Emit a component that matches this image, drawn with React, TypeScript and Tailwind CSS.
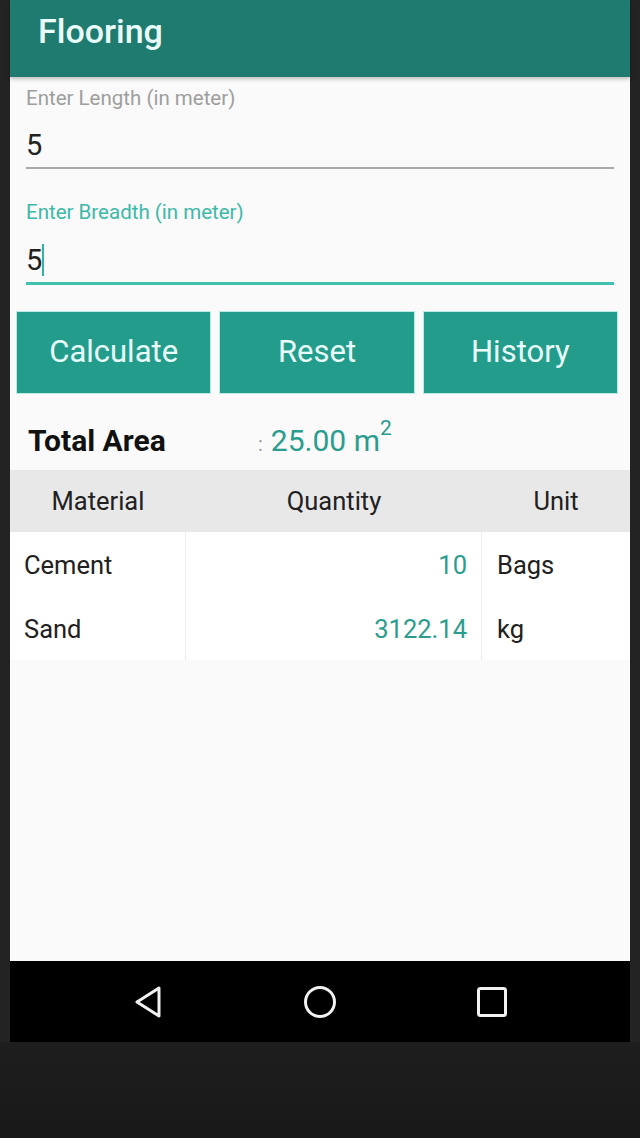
import React from "react";

export default function App() {
  const font = { fontFamily: "Roboto, 'Noto Sans', sans-serif" };
  return (
    <div className="w-[640px] h-[1138px] bg-[#1c1c1c] flex flex-col" style={font}>
      <div className="flex flex-col px-[10px] bg-[#232323]">
        {/* Header */}
        <div className="h-[77px] bg-[#1f7b70] flex items-start pl-[28px] pt-[10px] shadow-[0_2px_4px_rgba(0,0,0,0.25)] z-10 relative">
          <span className="text-[34px] font-medium text-[#eafffb] leading-[42px]">Flooring</span>
        </div>
        {/* Content */}
        <div className="h-[884px] bg-[#fafafa] flex flex-col">
          <div className="px-[16px] pt-[9px] flex flex-col">
            <span className="text-[20.5px] leading-[24px] text-[#9e9e9e]">Enter Length (in meter)</span>
            <span className="text-[29px] leading-[34px] text-[#212121] mt-[18px]">5</span>
            <div className="h-[2px] bg-[#a8a8a8] mt-[5px]"></div>
          </div>
          <div className="px-[16px] pt-[31px] flex flex-col">
            <span className="text-[20.5px] leading-[24px] text-[#3cb9a8]">Enter Breadth (in meter)</span>
            <div className="flex items-center mt-[19px] h-[34px]">
              <span className="text-[29px] leading-[34px] text-[#212121]">5</span>
              <span className="w-[2px] h-[32px] bg-[#33b3a3]"></span>
            </div>
            <div className="h-[3px] bg-[#3fc0b0] mt-[5px]"></div>
          </div>
          <div className="flex gap-[8px] pl-[6px] pr-[12px] mt-[26px] h-[83px]">
            {["Calculate", "Reset", "History"].map((t) => (
              <div key={t} className="flex-1 bg-[#249c8c] border border-[#b8ece5] flex items-center justify-center">
                <span className="text-[31px] text-[#e8fffb]">{t}</span>
              </div>
            ))}
          </div>
          <div className="flex items-center h-[62px] mt-[15px] pl-[18px]">
            <span className="text-[30px] font-bold text-[#111] w-[230px]">Total Area</span>
            <span className="text-[30px] text-[#2a9d8f]">
              <span className="text-[#9e9e9e] text-[20px] mr-[8px]">:</span>25.00 m
              <sup className="text-[21px] -top-[0.75em]">2</sup>
            </span>
          </div>
          {/* Table */}
          <div className="-mt-[1px] flex flex-col">
            <div className="h-[62px] bg-[#e8e8e8] flex items-center text-[25.5px] text-[#212121]">
              <div className="w-[176px] text-center">Material</div>
              <div className="w-[296px] text-center">Quantity</div>
              <div className="flex-1 text-center">Unit</div>
            </div>
            <div className="flex bg-white text-[25.5px] text-[#212121] h-[128px]">
              <div className="w-[176px] border-r border-[#ececec] flex flex-col pl-[14px]">
                <div className="h-[66px] flex items-center">Cement</div>
                <div className="h-[62px] flex items-center">Sand</div>
              </div>
              <div className="w-[296px] border-r border-[#ececec] flex flex-col items-end pr-[14px] text-[#2a9d8f]">
                <div className="h-[66px] flex items-center">10</div>
                <div className="h-[62px] flex items-center">3122.14</div>
              </div>
              <div className="flex-1 flex flex-col pl-[15px]">
                <div className="h-[66px] flex items-center">Bags</div>
                <div className="h-[62px] flex items-center">kg</div>
              </div>
            </div>
          </div>
        </div>
        {/* Nav bar */}
        <div className="h-[81px] bg-black flex items-center justify-center gap-[139px] pl-[4px]">
          <svg width="32" height="34" viewBox="0 0 32 34" className="-ml-[4px]">
            <path d="M27 3 L5 17 L27 31 Z" fill="none" stroke="#f2f2f2" strokeWidth="3" strokeLinejoin="round" />
          </svg>
          <svg width="34" height="34" viewBox="0 0 34 34">
            <circle cx="17" cy="17" r="14.5" fill="none" stroke="#f2f2f2" strokeWidth="3" />
          </svg>
          <svg width="32" height="32" viewBox="0 0 32 32">
            <rect x="2.5" y="2.5" width="27" height="27" rx="2" fill="none" stroke="#f2f2f2" strokeWidth="3" />
          </svg>
        </div>
      </div>
      <div className="flex-1 bg-gradient-to-b from-[#1e1e1e] to-[#181818]"></div>
    </div>
  );
}
